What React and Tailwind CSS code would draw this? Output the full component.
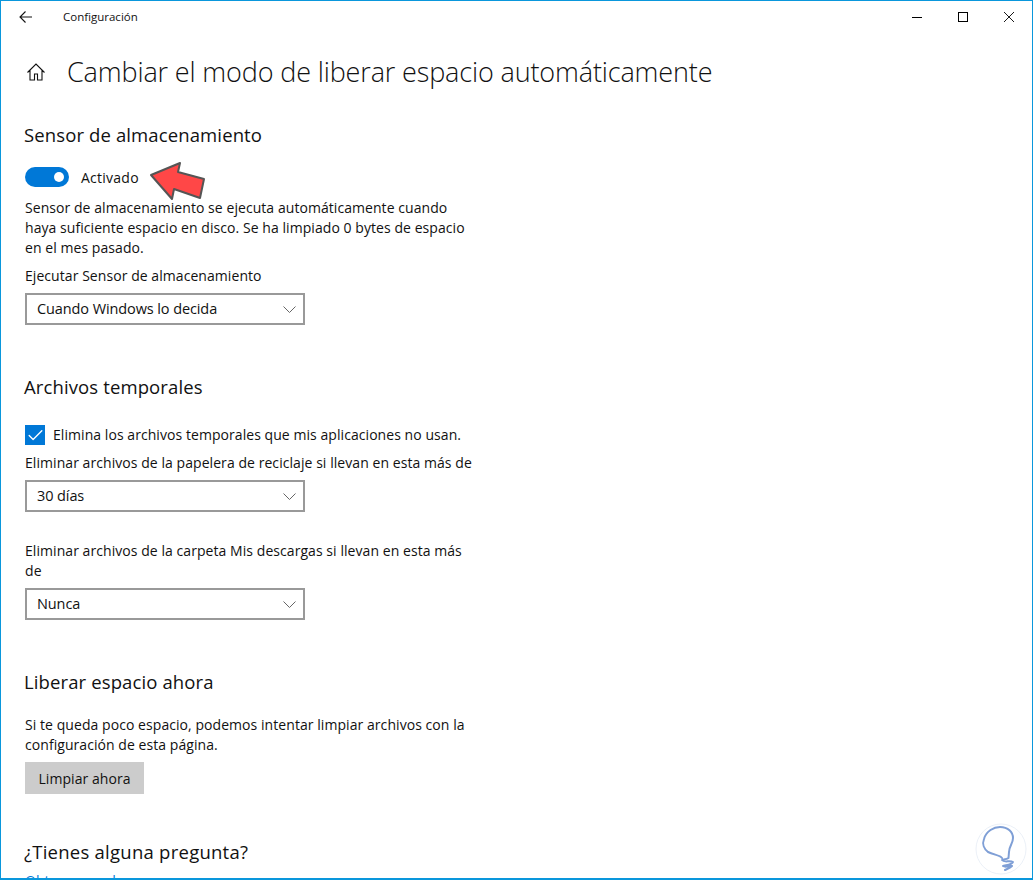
import { Check } from "lucide-react";

const Select = ({ value }) => (
  <div className="flex h-8 w-[280px] items-center justify-between border-2 border-[#999999] pl-[10px] pr-[7px] text-[#111111]">
    <span className="text-[14.5px] tracking-[-0.1px]">{value}</span>
    <svg viewBox="0 0 13 7" className="h-[7px] w-[13px] text-[#666666]" fill="none" stroke="currentColor" strokeWidth="1">
      <path d="M.5.5l6 6 6-6" />
    </svg>
  </div>
);

const Heading = ({ children, className }) => (
  <h2 className={`text-[18.5px] leading-6 tracking-[0.12px] text-[#111111] ${className}`}>{children}</h2>
);

const Label = ({ children, className = "" }) => (
  <p className={`w-[452px] text-[14px] leading-5 tracking-[0.06px] text-[#111111] ${className}`}>{children}</p>
);

export default function App() {
  return (
    <div className="relative h-[880px] w-[1033px] overflow-hidden border border-b-2 border-[#0a97dc] bg-white font-['Open_Sans',sans-serif]">
      {/* Title bar */}
      <div className="flex h-[31px] items-center">
        <svg viewBox="0 0 13 12" className="ml-[18px] h-[12px] w-[13px] text-[#111111]" fill="none" stroke="currentColor" strokeWidth="1.1">
          <path d="M13 6H1M6.500.5 1 6l5.500 5.500" />
        </svg>
        <span className="ml-[31px] text-[11.5px] text-[#111111]">Configuración</span>
        <div className="ml-auto mr-[18px] flex items-center gap-[36px] text-[#000000]">
          <svg viewBox="0 0 10 10" className="h-[10px] w-[10px]" fill="none" stroke="currentColor" strokeWidth="1">
            <path d="M0 5.500h10" />
          </svg>
          <svg viewBox="0 0 10 10" className="h-[10px] w-[10px]" fill="none" stroke="currentColor" strokeWidth="1">
            <rect x=".5" y=".5" width="9" height="9" />
          </svg>
          <svg viewBox="0 0 10 10" className="h-[10px] w-[10px]" fill="none" stroke="currentColor" strokeWidth="0.9">
            <path d="M0 0l10 10M10 0 0 10" />
          </svg>
        </div>
      </div>

      <div className="pl-[24px]">
        {/* Page title */}
        <div className="mt-[20px] flex h-[40px] items-center">
          <svg viewBox="0 0 20 20" className="ml-[1px] h-5 w-5 text-[#111111]" fill="none" stroke="currentColor" strokeWidth="1.1">
            <path d="M1.500 10.500 10 2l8.500 8.500M4 8v10h4.500v-6h3v6H16V8" />
          </svg>
          <h1 className="ml-[21px] text-[27px] font-light tracking-[-0.14px] text-[#111111]">Cambiar el modo de liberar espacio automáticamente</h1>
        </div>

        {/* Storage sense */}
        <Heading className="mt-[31px] -ml-px">Sensor de almacenamiento</Heading>
        <div className="mt-[20px] flex h-5 items-center">
          <div className="flex h-5 w-11 items-center justify-end rounded-full bg-[#0078d7] pr-[5px]">
            <div className="h-[10px] w-[10px] rounded-full bg-white" />
          </div>
          <span className="ml-3 text-[14px] tracking-[0.25px] text-[#111111]">Activado</span>
        </div>
        <Label className="mt-[11px]">
          Sensor de almacenamiento se ejecuta automáticamente cuando haya suficiente espacio en disco. Se ha limpiado 0 bytes de espacio en el mes pasado.
        </Label>
        <Label className="mt-[8px]">Ejecutar Sensor de almacenamiento</Label>
        <div className="mt-[7px]">
          <Select value="Cuando Windows lo decida" />
        </div>

        {/* Temporary files */}
        <Heading className="mt-[50px] -ml-px">Archivos temporales</Heading>
        <div className="mt-[26px] flex h-5 items-center">
          <div className="flex h-5 w-5 items-center justify-center bg-[#0078d7]">
            <Check className="h-[19px] w-[19px] text-white" strokeWidth={1.7} />
          </div>
          <span className="ml-2 pb-0.5 text-[14px] tracking-[0.06px] text-[#111111]">Elimina los archivos temporales que mis aplicaciones no usan.</span>
        </div>
        <Label className="mt-[8px]">Eliminar archivos de la papelera de reciclaje si llevan en esta más de</Label>
        <div className="mt-[7px]">
          <Select value="30 días" />
        </div>
        <Label className="mt-[29px]">Eliminar archivos de la carpeta Mis descargas si llevan en esta más de</Label>
        <div className="mt-[7px]">
          <Select value="Nunca" />
        </div>

        {/* Free up now */}
        <Heading className="mt-[50px] -ml-px">Liberar espacio ahora</Heading>
        <Label className="mt-[21px]">Si te queda poco espacio, podemos intentar limpiar archivos con la configuración de esta página.</Label>
        <button className="mt-[7px] flex h-8 w-[119px] items-center justify-center bg-[#cccccc] text-[14px] tracking-[0.06px] text-[#111111]">
          Limpiar ahora
        </button>

        {/* Help */}
        <Heading className="mt-[46px] -ml-px tracking-[0.25px]">¿Tienes alguna pregunta?</Heading>
        <a href="#" className="mt-[7px] block text-[14px] leading-5 tracking-[0.06px] text-[#0078d7]">Obtener ayuda</a>
      </div>

      {/* Annotation arrow */}
      <svg viewBox="0 0 60 44" className="absolute left-[147px] top-[159px] h-[44px] w-[60px]">
        <path d="M3 15 32 3l-2 9 26 7-4 19-26-9-2 10z" fill="#ff4747" stroke="#555555" strokeWidth="2" strokeLinejoin="round" />
      </svg>

      {/* Watermark */}
      <svg viewBox="0 0 54 54" className="absolute left-[973px] top-[821px] h-[54px] w-[54px]" fill="none">
        <circle cx="27" cy="27" r="25" stroke="#e6ecf5" strokeWidth="0.8" />
        <path d="M28 36C26 33 20 33 14 30 10 27 8 22 10 17 12 9 20 5 26 5 34 5 39 10 39 16 39 22 35 24 35 30L34.500 36C32 38 28 37 28 38 30 41 36 38 39 40 38 43 30 43 29 44 32 46 36 43 38 44 36 46 33 47 31 48" stroke="#7f9fd6" strokeWidth="2" strokeLinecap="round" strokeLinejoin="round" />
      </svg>
    </div>
  );
}
